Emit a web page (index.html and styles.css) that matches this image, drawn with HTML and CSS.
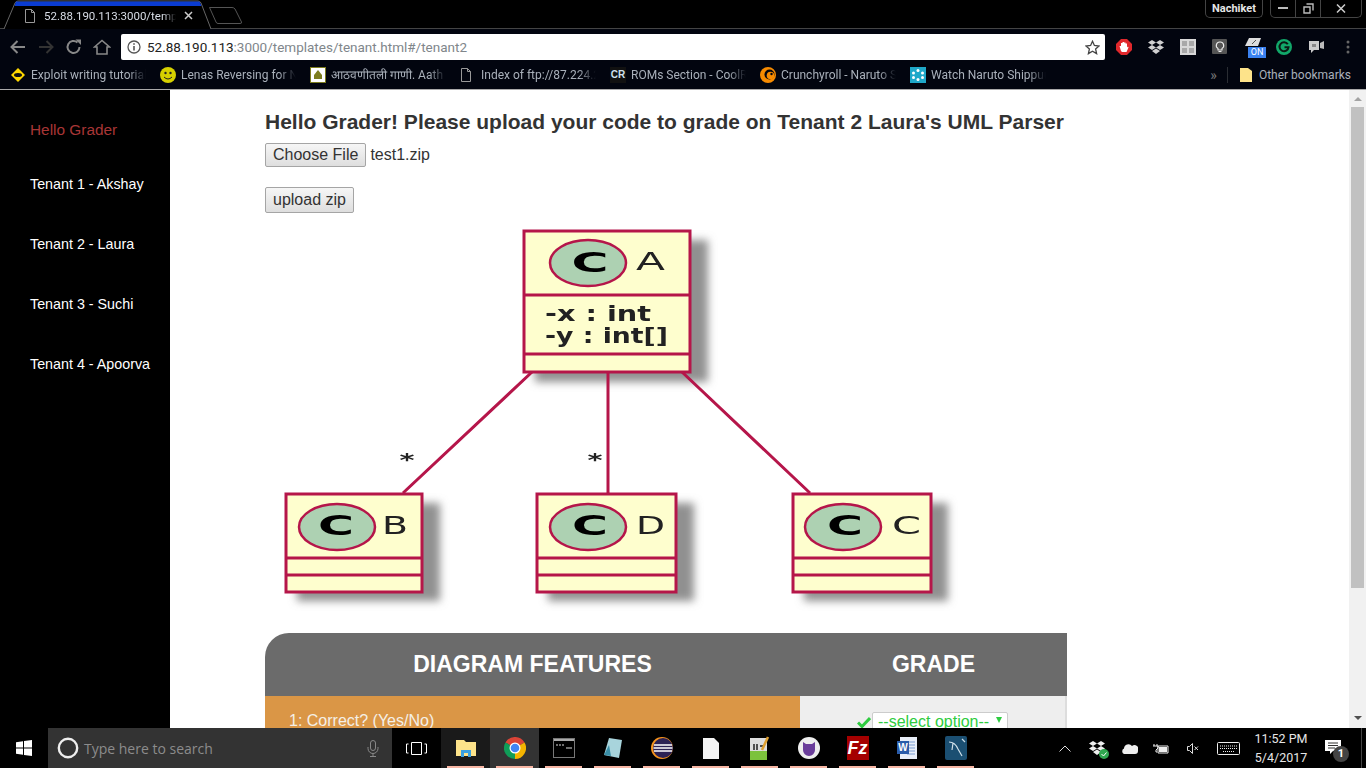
FILE: index.html
```html
<!DOCTYPE html>
<html>
<head>
    <title>Tenant</title>
    <link rel="stylesheet" href="styles.css">
</head>
<body>
    <div class="tabstrip">
        <div class="tab">
            <svg class="tab-shape" width="216" height="29" viewBox="0 0 216 29">
                <path d="M4 29 L15 3 Q16 1 18 1 H198 Q200 1 201 3 L211 29" fill="#000" stroke="#666"/>
                <path d="M16 1.500 H199.500 L201.500 6 H14.500 Z" fill="#0a3cd2"/>
            </svg>
            <svg class="tab-page" width="12" height="14" viewBox="0 0 12 14"><path d="M1.500 .500 H7.500 L10.500 3.500 V13.500 H1.500 Z M7.500 .500 V3.500 H10.500" fill="none" stroke="#999"/></svg>
            <span class="tab-title">52.88.190.113:3000/temp</span>
            <svg class="tab-close" width="9" height="9" viewBox="0 0 9 9"><path d="M1 1 L8 8 M8 1 L1 8" stroke="#ccc" stroke-width="1.500"/></svg>
        </div>
        <svg class="new-tab" width="36" height="19" viewBox="0 0 36 19"><path d="M1.500 1.500 H24 Q26 1.500 27 3 L33.500 16 Q34 17.500 32 17.500 H10 Q8.500 17.500 8 16 Z" fill="none" stroke="#555"/></svg>
        <div class="window-btns">
            <div class="profile">Nachiket</div>
            <div class="controls">
                <span class="ctl"><svg width="10" height="3"><rect width="10" height="2" fill="#bbb"/></svg></span>
                <span class="ctl"><svg width="11" height="11" viewBox="0 0 11 11"><path d="M1 4 H7 V10 H1 Z M3.500 1 H10 V7.500" fill="none" stroke="#bbb" stroke-width="1.400"/></svg></span>
                <span class="ctl ctl-close"><svg width="10" height="9" viewBox="0 0 10 9"><path d="M1 .500 L9 8.500 M9 .500 L1 8.500" stroke="#ccc" stroke-width="1.500"/></svg></span>
            </div>
        </div>
    </div>

    <div class="toolbar">
        <svg class="nav-icon" width="18" height="16" viewBox="0 0 18 16"><path d="M16 8 H2.500 M8.500 2 L2.500 8 L8.500 14" fill="none" stroke="#888" stroke-width="2"/></svg>
        <svg class="nav-icon" width="18" height="16" viewBox="0 0 18 16"><path d="M2 8 H15.500 M9.500 2 L15.500 8 L9.500 14" fill="none" stroke="#333" stroke-width="2"/></svg>
        <svg class="nav-icon" width="18" height="16" viewBox="0 0 18 16"><path d="M14.500 8 A6 6 0 1 1 12.500 3.500" fill="none" stroke="#888" stroke-width="2"/><path d="M10.500 .5 H16 V6 Z" fill="#888"/></svg>
        <svg class="nav-icon" width="18" height="16" viewBox="0 0 18 16"><path d="M1.500 8 L9 1.500 L16.500 8 H14 V15 H4 V8 Z" fill="none" stroke="#888" stroke-width="1.600"/></svg>
        <div class="omnibox">
            <svg class="info" width="14" height="14" viewBox="0 0 14 14"><circle cx="7" cy="7" r="6" fill="none" stroke="#555" stroke-width="1.300"/><path d="M7 6 V10.500 M7 3.300 V4.800" stroke="#555" stroke-width="1.600"/></svg>
            <span class="url"><b>52.88.190.113</b>:3000/templates/tenant.html#/tenant2</span>
            <svg class="star" width="15" height="15" viewBox="0 0 15 15"><path d="M7.500 1.300 L9.400 5.500 L14 6 L10.600 9 L11.600 13.600 L7.500 11.200 L3.400 13.600 L4.400 9 L1 6 L5.600 5.500 Z" fill="none" stroke="#444" stroke-width="1.300"/></svg>
        </div>
        <div class="extensions">
            <svg class="ext" width="16" height="16" viewBox="0 0 16 16"><path d="M5 0 H11 L16 5 V11 L11 16 H5 L0 11 V5 Z" fill="#e0282c"/><path d="M5 12 L3.500 7 H5 V4 H6.500 V3 H8 V3.500 H9.500 V4.500 H11 V8.500 L12 7.500 L12.500 8.500 L10.500 13 H6 Z" fill="#fff"/></svg>
            <svg class="ext" width="16" height="16" viewBox="0 0 16 16"><path d="M4 1 L8 3.500 L4 6 L0 3.500 Z M12 1 L16 3.500 L12 6 L8 3.500 Z M4 6 L8 8.500 L4 11 L0 8.500 Z M12 6 L16 8.500 L12 11 L8 8.500 Z M4 12 L8 9.500 L12 12 L8 15 Z" fill="#d0d0d0"/></svg>
            <svg class="ext" width="16" height="16" viewBox="0 0 16 16"><rect width="16" height="16" fill="#d8d8d8"/><path d="M2 2 H7 V7 H2 Z M9 2 H14 V7 H9 Z M2 9 H7 V14 H2 Z M9 9 H14 V14 H9 Z" fill="#a8a8a8"/></svg>
            <svg class="ext" width="16" height="16" viewBox="0 0 16 16"><rect width="15" height="15" rx="1" fill="#555"/><path d="M8 3 A3.500 3.500 0 0 1 10 9.500 V11 H6 V9.500 A3.500 3.500 0 0 1 8 3 Z M6.500 12.500 H9.500" fill="none" stroke="#eee" stroke-width="1.100"/></svg>
            <div class="ext ext-on">
                <svg width="16" height="10" viewBox="0 0 16 10"><path d="M4 0 H16 L13 8 H0 Z" fill="#ddd"/><path d="M7 6 L11 2" stroke="#555"/></svg>
                <span class="on-badge">ON</span>
            </div>
            <svg class="ext ext-g" width="16" height="16" viewBox="0 0 16 16"><circle cx="8" cy="8" r="8" fill="#12a86a"/><path d="M11.800 5.300 A4.500 4.500 0 1 0 12.500 8.300 H8.500" fill="none" stroke="#0b1a14" stroke-width="2"/></svg>
            <svg class="ext" width="16" height="14" viewBox="0 0 16 14"><path d="M1 1 H11 V10 H6 L3 13 V10 H1 Z" fill="#ccc"/><path d="M12 3 L16 1 V9 L12 8 Z" fill="#bbb"/><rect x="4" y="4" width="4" height="3" fill="#888"/></svg>
            <svg class="ext ext-menu" width="4" height="14" viewBox="0 0 4 14"><circle cx="2" cy="2" r="1.500" fill="#666"/><circle cx="2" cy="7" r="1.500" fill="#666"/><circle cx="2" cy="12" r="1.500" fill="#666"/></svg>
        </div>
    </div>

    <div class="bookmarks">
        <div class="bookmark">
            <svg width="16" height="16" viewBox="0 0 16 16"><path d="M8 1 L15 8 L8 15 L1 8 Z" fill="#ffd800"/><ellipse cx="8" cy="8" rx="4" ry="2" fill="#111"/></svg>
            <span>Exploit writing tutorial</span>
        </div>
        <div class="bookmark">
            <svg width="16" height="16" viewBox="0 0 16 16"><circle cx="8" cy="8" r="8" fill="#d6d000"/><circle cx="5.500" cy="6" r="1.200" fill="#222"/><circle cx="10.500" cy="6" r="1.200" fill="#222"/><path d="M4 10 Q8 14 12 10" fill="none" stroke="#222"/></svg>
            <span>Lenas Reversing for N</span>
        </div>
        <div class="bookmark">
            <svg width="16" height="16" viewBox="0 0 16 16"><rect x=".5" y=".5" width="15" height="15" fill="#fff" stroke="#7d7d1e"/><path d="M8 3 L12 8 V12 H4 V8 Z" fill="#7d7d1e"/></svg>
            <span>आठवणीतली गाणी. Aath</span>
        </div>
        <div class="bookmark">
            <svg width="12" height="14" viewBox="0 0 12 14"><path d="M1.500 .500 H7.500 L10.500 3.500 V13.500 H1.500 Z M7.500 .500 V3.500 H10.500" fill="none" stroke="#999"/></svg>
            <span class="page-bm">Index of ftp://87.224.2</span>
        </div>
        <div class="bookmark">
            <span class="cr-icon">CR</span>
            <span>ROMs Section - CoolR</span>
        </div>
        <div class="bookmark">
            <svg width="16" height="16" viewBox="0 0 16 16"><circle cx="8" cy="8" r="8" fill="#f78b00"/><circle cx="9.500" cy="7.500" r="5" fill="#02050f"/><circle cx="10.500" cy="8.500" r="3.800" fill="#f78b00"/><circle cx="11.500" cy="7" r="1.200" fill="#02050f"/></svg>
            <span>Crunchyroll - Naruto S</span>
        </div>
        <div class="bookmark">
            <svg width="16" height="16" viewBox="0 0 16 16"><rect width="16" height="16" fill="#1fa8c9"/><g fill="#fff"><circle cx="8" cy="3.500" r="1.500"/><circle cx="8" cy="12.500" r="1.500"/><circle cx="3.500" cy="6" r="1.500"/><circle cx="12.500" cy="6" r="1.500"/><circle cx="3.500" cy="10.500" r="1.500"/><circle cx="12.500" cy="10.500" r="1.500"/></g></svg>
            <span>Watch Naruto Shippuu</span>
        </div>
        <div class="bookmarks-end">
            <span class="more">»</span>
            <span class="bm-sep"></span>
            <svg width="12" height="14" viewBox="0 0 12 14"><path d="M0 0 H8 L12 3 V14 H0 Z" fill="#fde38a"/></svg>
            <span class="other">Other bookmarks</span>
        </div>
    </div>

    <div class="page">
        <nav class="sidebar">
            <div class="greeting">Hello Grader</div>
            <a class="side-link">Tenant 1 - Akshay</a>
            <a class="side-link">Tenant 2 - Laura</a>
            <a class="side-link">Tenant 3 - Suchi</a>
            <a class="side-link">Tenant 4 - Apoorva</a>
        </nav>

        <main class="content">
            <h3 class="title">Hello Grader! Please upload your code to grade on Tenant 2 Laura's UML Parser</h3>
            <div class="file-row">
                <button class="btn" type="button">Choose File</button>
                <span>test1.zip</span>
            </div>
            <button class="btn btn-upload" type="button">upload zip</button>

            <svg class="uml" width="700" height="400" viewBox="265 222 700 400">
                <defs>
                    <filter id="shadow" x="-20%" y="-20%" width="140%" height="140%"><feGaussianBlur stdDeviation="4"/></filter>
                    <filter id="soft" x="-5%" y="-5%" width="110%" height="110%"><feGaussianBlur stdDeviation="0.700"/></filter>
                </defs>
                <g fill="#909090" filter="url(#shadow)">
                    <rect x="535" y="240" width="173" height="142"/>
                    <rect x="297" y="503" width="143" height="98"/>
                    <rect x="548" y="503" width="146" height="98"/>
                    <rect x="804" y="503" width="144" height="98"/>
                </g>
                <g filter="url(#soft)">
                    <g stroke="#b5134a" stroke-width="3" fill="none">
                        <path d="M532 372 L403 493 M608 372 V493 M682 372 L810 493"/>
                    </g>

                    <g stroke="#b5134a" stroke-width="3" fill="#fefece">
                        <rect x="524" y="231" width="166" height="141"/>
                        <path d="M524 295 H690 M524 354 H690"/>
                        <ellipse cx="588" cy="263" rx="38" ry="23" fill="#add1b2" stroke-width="2.500"/>
                    </g>
                    <text class="uml-c" x="590" y="272" text-anchor="middle" textLength="37" lengthAdjust="spacingAndGlyphs">C</text>
                    <text class="uml-name" x="636" y="270" textLength="29" lengthAdjust="spacingAndGlyphs">A</text>
                    <text class="uml-attr" x="545" y="321" textLength="106" lengthAdjust="spacingAndGlyphs">-x : int</text>
                    <text class="uml-attr" x="545" y="343" textLength="123" lengthAdjust="spacingAndGlyphs">-y : int[]</text>

                    <g stroke="#b5134a" stroke-width="3" fill="#fefece">
                        <rect x="286" y="494" width="136" height="98"/>
                        <path d="M286 558 H422 M286 575 H422"/>
                        <ellipse cx="337" cy="527" rx="38" ry="23" fill="#add1b2" stroke-width="2.500"/>
                        <rect x="537" y="494" width="139" height="98"/>
                        <path d="M537 558 H676 M537 575 H676"/>
                        <ellipse cx="588" cy="527" rx="38" ry="23" fill="#add1b2" stroke-width="2.500"/>
                        <rect x="793" y="494" width="138" height="98"/>
                        <path d="M793 558 H931 M793 575 H931"/>
                        <ellipse cx="843" cy="527" rx="38" ry="23" fill="#add1b2" stroke-width="2.500"/>
                    </g>
                    <text class="uml-c" x="336" y="535" text-anchor="middle" textLength="36" lengthAdjust="spacingAndGlyphs">C</text>
                    <text class="uml-name" x="382" y="534" textLength="26" lengthAdjust="spacingAndGlyphs">B</text>
                    <text class="uml-c" x="590" y="535" text-anchor="middle" textLength="36" lengthAdjust="spacingAndGlyphs">C</text>
                    <text class="uml-name" x="636" y="534" textLength="29" lengthAdjust="spacingAndGlyphs">D</text>
                    <text class="uml-c" x="845" y="535" text-anchor="middle" textLength="36" lengthAdjust="spacingAndGlyphs">C</text>
                    <text class="uml-name" x="892" y="534" textLength="29" lengthAdjust="spacingAndGlyphs">C</text>
                    <text class="uml-star" x="407" y="466" text-anchor="middle" textLength="15" lengthAdjust="spacingAndGlyphs">*</text>
                    <text class="uml-star" x="595" y="466" text-anchor="middle" textLength="15" lengthAdjust="spacingAndGlyphs">*</text>
                </g>
            </svg>

            <table class="grades">
                <thead>
                    <tr>
                        <th class="col-feature">DIAGRAM FEATURES</th>
                        <th class="col-grade">GRADE</th>
                    </tr>
                </thead>
                <tbody>
                    <tr>
                        <td class="feature">1: Correct? (Yes/No)</td>
                        <td class="grade">
                            <div class="grade-inner">
                                <svg width="14" height="12" viewBox="0 0 14 12"><path d="M1 6.500 L5 10.500 L13 2" fill="none" stroke="#2ecc40" stroke-width="3"/></svg>
                                <span class="select-wrap">
                                    <select class="grade-select"><option>--select option--</option></select>
                                    <i class="select-arrow"></i>
                                </span>
                            </div>
                        </td>
                    </tr>
                </tbody>
            </table>
        </main>

        <div class="scrollbar">
            <i class="arrow-up"></i>
            <div class="thumb"></div>
            <i class="arrow-down"></i>
        </div>
    </div>

    <footer class="taskbar">
        <svg class="win-logo" width="16" height="16" viewBox="0 0 16 16"><path d="M0 2.300 L7 1.300 V7.500 H0 Z M8 1.100 L16 0 V7.500 H8 Z M0 8.500 H7 V14.700 L0 13.700 Z M8 8.500 H16 V16 L8 14.900 Z" fill="#fff"/></svg>
        <div class="search">
            <svg width="22" height="22" viewBox="0 0 22 22"><circle cx="11" cy="11" r="9.200" fill="none" stroke="#eee" stroke-width="2.400"/></svg>
            <span class="search-text">Type here to search</span>
            <svg class="mic" width="12" height="17" viewBox="0 0 12 17"><rect x="3.500" y=".5" width="5" height="10" rx="2.500" fill="none" stroke="#888"/><path d="M1 7 V8.500 A5 5 0 0 0 11 8.500 V7 M6 13.500 V16 M3 16.500 H9" fill="none" stroke="#888"/></svg>
        </div>
        <svg class="task-view" width="21" height="13" viewBox="0 0 21 13"><path d="M5.500 .5 H15.500 V12.500 H5.500 Z M2.500 2 H.5 V11 H2.500 M18.500 2 H20.500 V11 H18.500" fill="none" stroke="#fff"/></svg>

        <div class="apps">
            <div class="app app-open">
                <svg width="20" height="18" viewBox="0 0 20 18"><path d="M0 1 H8 L10 3 H20 V17 H0 Z" fill="#fde38a"/><path d="M5 11 H15 V18 H12 V14 H8 V18 H5 Z" fill="#3aa0e0"/></svg>
            </div>
            <div class="app app-active">
                <svg width="22" height="22" viewBox="0 0 24 24"><path d="M12 12 L1.600 6 A12 12 0 0 1 22.400 6 Z" fill="#db4437"/><path d="M12 12 L1.600 6 A12 12 0 0 0 12 24 Z" fill="#0f9d58"/><path d="M12 12 L22.400 6 A12 12 0 0 1 12 24 Z" fill="#f4b400"/><circle cx="12" cy="12" r="6" fill="#fff"/><circle cx="12" cy="12" r="4.700" fill="#4285f4"/></svg>
            </div>
            <div class="app">
                <svg width="22" height="20" viewBox="0 0 22 20"><rect x=".5" y=".5" width="21" height="19" fill="#000" stroke="#777"/><rect x="1" y="1" width="20" height="2" fill="#aaa"/><path d="M3 7 H5 M6 7 H8 M9 7 H11 M13 10 H19" stroke="#ddd"/></svg>
            </div>
            <div class="app">
                <svg width="20" height="22" viewBox="0 0 20 22"><path d="M6 1 L19 3 L16 21 L1 18 Z" fill="#a8d4dc"/><path d="M1 18 L6 8 L8 19 Z" fill="#3a8fa8"/></svg>
            </div>
            <div class="app">
                <svg width="22" height="22" viewBox="0 0 22 22"><circle cx="11" cy="11" r="11" fill="#f7941e"/><circle cx="12" cy="11" r="10" fill="#2c2255"/><path d="M3 8 H21 M2.500 11 H21.500 M3 14 H21" stroke="#fff" stroke-width="1.500"/></svg>
            </div>
            <div class="app">
                <svg width="16" height="21" viewBox="0 0 16 21"><path d="M0 0 H11 L16 5 V21 H0 Z" fill="#f4f4f4"/></svg>
            </div>
            <div class="app">
                <svg width="20" height="24" viewBox="0 0 20 24"><rect y="2" width="17" height="22" fill="#ddd"/><rect y="15" width="17" height="9" fill="#7cc23c"/><path d="M4 8 V14 M7 8 V14 M10 10 H13" stroke="#222" stroke-width="1.500"/><path d="M12 14 L18 1" stroke="#e0a030" stroke-width="2.500"/></svg>
            </div>
            <div class="app">
                <svg width="22" height="22" viewBox="0 0 22 22"><circle cx="11" cy="11" r="11" fill="#eee"/><path d="M5 5 L8 7 H14 L17 5 V13 A6 6 0 0 1 5 13 Z" fill="#6a3d9a"/></svg>
            </div>
            <div class="app">
                <div class="fz-icon">Fz</div>
            </div>
            <div class="app">
                <svg width="20" height="22" viewBox="0 0 20 22"><path d="M3 0 H20 V22 H3 Z" fill="#e8eef8"/><path d="M10 5 H18 M10 8 H18 M10 11 H18 M10 14 H18 M10 17 H18" stroke="#7a9cd0"/><rect y="4" width="12" height="13" fill="#2a5caa"/><text class="word-w" x="6" y="14" text-anchor="middle">W</text></svg>
            </div>
            <div class="app">
                <svg width="22" height="24" viewBox="0 0 22 24"><rect width="22" height="24" rx="2" fill="#1b4f72"/><path d="M4 6 Q10 6 13 13 L17 20 M8 7 L7 14 M17 3 L20 6" fill="none" stroke="#cfe0ea" stroke-width="1.200"/></svg>
            </div>
        </div>

        <div class="tray">
            <div class="tray-cell">
                <svg width="12" height="7" viewBox="0 0 12 7"><path d="M.5 6.500 L6 1 L11.500 6.500" fill="none" stroke="#ddd"/></svg>
            </div>
            <div class="tray-cell">
                <div class="tray-dropbox">
                    <svg width="16" height="16" viewBox="0 0 16 16"><path d="M4 1 L8 3.500 L4 6 L0 3.500 Z M12 1 L16 3.500 L12 6 L8 3.500 Z M4 6 L8 8.500 L4 11 L0 8.500 Z M12 6 L16 8.500 L12 11 L8 8.500 Z M4 12 L8 9.500 L12 12 L8 15 Z" fill="#eee"/></svg>
                    <svg class="tray-ok" width="10" height="10" viewBox="0 0 10 10"><circle cx="5" cy="5" r="5" fill="#2fa84f"/><path d="M2.500 5 L4.500 7 L7.500 3.500" fill="none" stroke="#fff"/></svg>
                </div>
            </div>
            <div class="tray-cell">
                <svg width="17" height="11" viewBox="0 0 17 11"><path d="M3 11 A3 3 0 0 1 3 5.500 A4.500 4.500 0 0 1 11 3 A4 4 0 0 1 17 8 Q17 11 14 11 Z" fill="#eee"/></svg>
            </div>
            <div class="tray-cell">
                <svg width="16" height="11" viewBox="0 0 16 11"><path d="M5 3 H15 V10 H5 Z" fill="none" stroke="#eee"/><rect x="6" y="4" width="8" height="5" fill="#eee"/><path d="M1 1 V3 M4 1 V3 M0 3 H5 V5 L3 7 V9 H4" fill="none" stroke="#eee"/></svg>
            </div>
            <div class="tray-cell">
                <svg width="12" height="11" viewBox="0 0 12 11"><path d="M.5 3.500 H2.500 L5.500 .5 V10.500 L2.500 7.500 H.5 Z M7.500 3.500 L11 7 M11 3.500 L7.500 7" fill="none" stroke="#ddd"/></svg>
            </div>
            <div class="tray-cell tray-kbd">
                <svg width="23" height="13" viewBox="0 0 23 13"><rect x=".5" y=".5" width="22" height="12" rx="1" fill="none" stroke="#eee"/><path d="M3 4 H20 M3 6.500 H20 M6 9.500 H17" stroke="#eee" stroke-dasharray="1 1"/></svg>
            </div>
            <div class="clock">
                <div>11:52 PM</div>
                <div>5/4/2017</div>
            </div>
            <div class="tray-cell tray-notify">
                <div class="notify">
                    <svg width="16" height="14" viewBox="0 0 16 14"><path d="M0 0 H16 V11 H8 L5 14 V11 H0 Z" fill="#fff"/><path d="M3 3 H13 M3 5.500 H13 M3 8 H10" stroke="#333"/></svg>
                    <span class="notify-count">1</span>
                </div>
            </div>
            <div class="show-desktop"></div>
        </div>
    </footer>
</body>
</html>
```

FILE: styles.css
```css
body {
    font-family: 'Liberation Sans', Arial, sans-serif;
    margin: 0;
    height: 100vh;
    display: flex;
    flex-direction: column;
    overflow: hidden;
    background: #000;
    color: #333;
}

svg {
    display: block;
    flex-shrink: 0;
}

/* browser chrome */
.tabstrip {
    height: 29px;
    box-sizing: border-box;
    display: flex;
    background: #000;
    border-bottom: 1px solid #444;
    font-family: Roboto, sans-serif;
}

.tab {
    position: relative;
    width: 208px;
    height: 29px;
    display: flex;
    align-items: center;
    flex-shrink: 0;
}

.tab-shape {
    position: absolute;
    left: 0;
    top: 0;
}

.tab-page {
    position: relative;
    margin-left: 24px;
    margin-top: 2px;
}

.tab-title {
    position: relative;
    margin-left: 8px;
    margin-top: 2px;
    width: 132px;
    font-size: 11.500px;
    color: #d8dde6;
    white-space: nowrap;
    overflow: hidden;
    -webkit-mask-image: linear-gradient(to right, #000 90%, transparent);
}

.tab-close {
    position: relative;
    margin-left: 8px;
    margin-top: 2px;
}

.new-tab {
    margin-left: 0;
    margin-top: 6px;
}

.window-btns {
    margin-left: auto;
    margin-right: 4px;
    display: flex;
    gap: 7px;
    align-items: flex-start;
}

.profile {
    width: 58px;
    height: 18px;
    box-sizing: border-box;
    border: 1px solid #444;
    border-top: none;
    border-radius: 0 0 5px 5px;
    font-size: 11px;
    font-weight: 700;
    line-height: 18px;
    text-align: center;
    color: #e6e6e6;
}

.controls {
    width: 92px;
    height: 18px;
    box-sizing: border-box;
    display: flex;
    border: 1px solid #444;
    border-top: none;
    border-radius: 0 0 5px 5px;
}

.ctl {
    width: 24px;
    display: flex;
    align-items: center;
    justify-content: center;
    border-right: 1px solid #444;
}

.ctl-close {
    flex: 1;
    border-right: none;
}

.toolbar {
    height: 31px;
    display: flex;
    align-items: center;
    background: #02050f;
    padding-left: 9px;
}

.nav-icon {
    margin-right: 10px;
}

.omnibox {
    width: 984px;
    height: 26px;
    margin-top: 5px;
    box-sizing: border-box;
    display: flex;
    align-items: center;
    background: #fff;
    border-radius: 2px;
    padding-left: 6px;
    flex-shrink: 0;
}

.url {
    margin-left: 6px;
    font-family: Roboto, sans-serif;
    font-size: 13.500px;
    color: #80868b;
    white-space: nowrap;
}

.url b {
    font-weight: 400;
    color: #222;
}

.star {
    margin-left: auto;
    margin-right: 5px;
}

.nav-icon,
.extensions {
    margin-top: 5px;
}

.extensions {
    display: flex;
    align-items: center;
}

.ext {
    margin-left: 16px;
}

.ext:first-child {
    margin-left: 11px;
}

.ext-on {
    position: relative;
    width: 16px;
    height: 16px;
    margin-left: 17px;
    margin-top: -2px;
}

.on-badge {
    position: absolute;
    left: 3px;
    top: 9px;
    width: 18px;
    height: 11px;
    background: #3b82f0;
    color: #fff;
    font-family: Roboto, sans-serif;
    font-size: 9px;
    line-height: 11px;
    text-align: center;
}

.ext-g {
    margin-left: 15px;
}

.ext-menu {
    margin-left: 22px;
}

.bookmarks {
    height: 29px;
    display: flex;
    align-items: center;
    background: #02050f;
    border-bottom: 1px solid #aaa;
    padding-left: 10px;
    font-family: Roboto, sans-serif;
    font-size: 12px;
    color: #a9b0ba;
}

.bookmark {
    width: 150px;
    display: flex;
    align-items: center;
    flex-shrink: 0;
    gap: 5px;
}

.bookmark > span {
    width: 115px;
    white-space: nowrap;
    overflow: hidden;
    -webkit-mask-image: linear-gradient(to right, #000 85%, transparent);
}

.bookmark .cr-icon {
    width: 16px;
    height: 16px;
    flex-shrink: 0;
    background: #111;
    color: #cfe0ee;
    font: 700 10px/16px 'Liberation Sans', sans-serif;
    text-align: center;
    -webkit-mask-image: none;
}

.bookmark .page-bm {
    margin-left: 4px;
}

.bookmarks-end {
    margin-left: auto;
    display: flex;
    align-items: center;
    padding-right: 15px;
}

.more {
    font-size: 14px;
    color: #777;
}

.bm-sep {
    width: 1px;
    height: 16px;
    margin: 0 12px 0 10px;
    background: #2a2d33;
}

.other {
    margin-left: 7px;
}

/* page */
.page {
    flex: 1;
    min-height: 0;
    display: flex;
    background: #fff;
}

.sidebar {
    width: 170px;
    flex-shrink: 0;
    background: #000;
    padding: 31px 0 0 30px;
    box-sizing: border-box;
}

.greeting {
    height: 18px;
    line-height: 18px;
    font-size: 15.400px;
    color: #a83636;
    margin-bottom: 35px;
}

.side-link {
    display: block;
    height: 60px;
    line-height: 20px;
    font-size: 14.300px;
    color: #fff;
}

.content {
    flex: 1;
    min-width: 0;
    overflow: hidden;
    padding: 20px 0 0 95px;
}

.title {
    margin: 0 0 8px;
    font-size: 21px;
    line-height: 24px;
    color: #333;
    white-space: nowrap;
}

.file-row {
    display: flex;
    align-items: center;
    gap: 4px;
    font-size: 16px;
    margin-top: 9px;
}

.btn {
    display: block;
    height: 24px;
    padding: 0 7px;
    font-family: 'Liberation Sans', sans-serif;
    font-size: 16px;
    color: #333;
    background: linear-gradient(#f6f6f6, #dedede);
    border: 1px solid #a5a5a5;
    border-radius: 2px;
}

.btn-upload {
    height: 26px;
    margin-top: 20px;
}

.uml {
    margin-top: 9px;
}

.uml-c {
    font-family: 'DejaVu Sans', sans-serif;
    font-size: 26px;
    font-weight: 700;
    fill: #000;
}

.uml-name {
    font-family: 'DejaVu Sans', sans-serif;
    font-size: 24px;
    fill: #222;
}

.uml-attr {
    font-family: 'DejaVu Sans', sans-serif;
    font-size: 21px;
    font-weight: 700;
    fill: #222;
}

.uml-star {
    font-family: 'DejaVu Sans', sans-serif;
    font-size: 18px;
    font-weight: 700;
    fill: #222;
}

.grades {
    width: 802px;
    margin-top: 11px;
    table-layout: fixed;
    border-collapse: separate;
    border-spacing: 0;
}

.grades th {
    height: 63px;
    padding: 0 0 1px;
    box-sizing: border-box;
    background: #6b6b6b;
    color: #fff;
    font-size: 23px;
    font-weight: 700;
}

.col-feature {
    width: 535px;
    border-top-left-radius: 24px;
}

.grades td {
    height: 60px;
    padding: 0;
    font-size: 16px;
    vertical-align: top;
}

.feature {
    background: #da9646;
    color: #f4efe6;
    padding: 16px 0 0 24px !important;
}

.grade {
    background: #eee;
    border-right: 2px solid #ddd;
}

.grade-inner {
    display: flex;
    justify-content: center;
    align-items: center;
    padding-top: 16px;
    gap: 1px;
}

.select-wrap {
    position: relative;
    display: block;
}

.grade-select {
    display: block;
    width: 136px;
    height: 19px;
    padding: 0 0 0 5px;
    appearance: none;
    -webkit-appearance: none;
    background: #fff;
    border: 1px solid #ccc;
    border-radius: 2px;
    font-family: 'Liberation Sans', sans-serif;
    font-size: 16px;
    color: #2ecc40;
}

.select-arrow {
    position: absolute;
    right: 6px;
    top: 5px;
    border-left: 3px solid transparent;
    border-right: 3px solid transparent;
    border-top: 6px solid #2ecc40;
}

.scrollbar {
    width: 17px;
    flex-shrink: 0;
    display: flex;
    flex-direction: column;
    align-items: center;
    background: #f1f1f1;
}

.arrow-up {
    margin-top: 7px;
    border-left: 4px solid transparent;
    border-right: 4px solid transparent;
    border-bottom: 4px solid #a3a3a3;
}

.thumb {
    width: 13px;
    height: 481px;
    margin-top: 6px;
    background: #c1c1c1;
}

.arrow-down {
    margin-top: auto;
    margin-bottom: 8px;
    border-left: 4px solid transparent;
    border-right: 4px solid transparent;
    border-top: 4px solid #505050;
}

/* windows taskbar */
.taskbar {
    height: 40px;
    flex-shrink: 0;
    display: flex;
    align-items: center;
    background: #000;
}

.win-logo {
    margin: 0 16px;
}

.search {
    width: 344px;
    height: 40px;
    box-sizing: border-box;
    display: flex;
    align-items: center;
    background: #333;
    padding: 0 13px 0 9px;
    flex-shrink: 0;
}

.search-text {
    margin-left: 5px;
    font-family: 'Open Sans', sans-serif;
    font-size: 14px;
    color: #8c8c8c;
}

.mic {
    margin-left: auto;
}

.task-view {
    margin: 0 14px 0 14px;
}

.apps {
    display: flex;
    height: 40px;
}

.app {
    width: 49px;
    height: 40px;
    box-sizing: border-box;
    display: flex;
    align-items: center;
    justify-content: center;
    position: relative;
}

.app::after {
    content: "";
    position: absolute;
    left: 6px;
    right: 6px;
    bottom: 0;
    height: 2px;
    background: #f7b6a4;
}

.app-open {
    background: #1a1a1a;
}

.app-active {
    background: #333;
}

.fz-icon {
    width: 22px;
    height: 24px;
    background: #a50000;
    color: #fff;
    font: italic 700 18px/24px 'Liberation Sans', sans-serif;
    text-align: center;
}

.word-w {
    font-family: 'Liberation Sans', sans-serif;
    font-size: 10px;
    font-weight: 700;
    fill: #fff;
}

.tray {
    margin-left: auto;
    display: flex;
    align-items: center;
    height: 40px;
}

.tray-cell {
    width: 32px;
    display: flex;
    justify-content: center;
}

.tray-kbd {
    width: 38px;
}

.tray-notify {
    width: 36px;
}

.tray-dropbox {
    position: relative;
}

.tray-ok {
    position: absolute;
    right: -4px;
    bottom: -3px;
}

.clock {
    width: 68px;
    font-family: Roboto, sans-serif;
    font-size: 12.500px;
    line-height: 19px;
    text-align: center;
    color: #e6e6e6;
}

.notify {
    position: relative;
    margin-top: -3px;
}

.notify-count {
    position: absolute;
    left: 8px;
    top: 6px;
    width: 16px;
    height: 16px;
    border-radius: 50%;
    background: #444;
    color: #fff;
    font-family: Roboto, sans-serif;
    font-size: 11px;
    font-weight: 700;
    line-height: 16px;
    text-align: center;
}

.show-desktop {
    width: 1px;
    height: 40px;
    margin-left: 10px;
    margin-right: 4px;
    background: #444;
}
```
